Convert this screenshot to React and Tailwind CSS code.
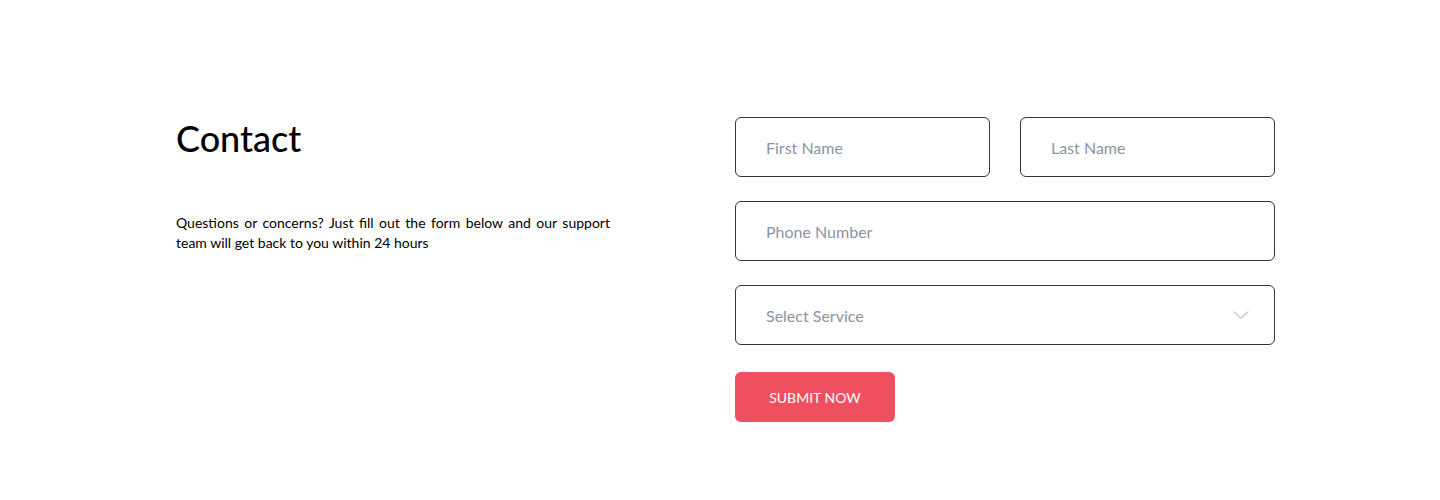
import React from "react";

export default function App() {
  return (
    <div className="min-h-[500px] w-full bg-white font-['Lato',sans-serif] text-black">
      <div className="flex pl-[176px] pt-[117px]">
        <div className="w-[434px]">
          <h1 className="mt-0 text-[36px] font-medium leading-[43px]">Contact</h1>
          <p className="mt-[53px] text-justify text-[14px] leading-[20px]">
            Questions or concerns? Just fill out the form below and our support team will get back to you within 24 hours
          </p>
        </div>
        <form className="ml-[125px] flex w-[540px] flex-col">
          <div className="grid grid-cols-2 gap-[30px]">
            <input
              placeholder="First Name"
              className="h-[60px] rounded-md border border-[#333] px-[30px] text-[16px] outline-none placeholder:text-[#8c94a3]"
            />
            <input
              placeholder="Last Name"
              className="h-[60px] rounded-md border border-[#333] px-[30px] text-[16px] outline-none placeholder:text-[#8c94a3]"
            />
          </div>
          <input
            placeholder="Phone Number"
            className="mt-6 h-[60px] rounded-md border border-[#333] px-[30px] text-[16px] outline-none placeholder:text-[#8c94a3]"
          />
          <div className="mt-6 flex h-[60px] items-center justify-between rounded-md border border-[#333] pl-[30px] pr-[25px]">
            <span className="pt-[2px] text-[16px] text-[#8c94a3]">Select Service</span>
            <svg width="16" height="10" viewBox="0 0 16 10" fill="none">
              <path d="M1 1.5L8 8.5L15 1.5" stroke="#9aa1ad" strokeWidth="1" />
            </svg>
          </div>
          <button
            type="button"
            className="mt-[27px] h-[50px] w-[160px] rounded-md bg-[#ef4f5f] text-[14px] uppercase text-white"
          >
            Submit Now
          </button>
        </form>
      </div>
    </div>
  );
}
